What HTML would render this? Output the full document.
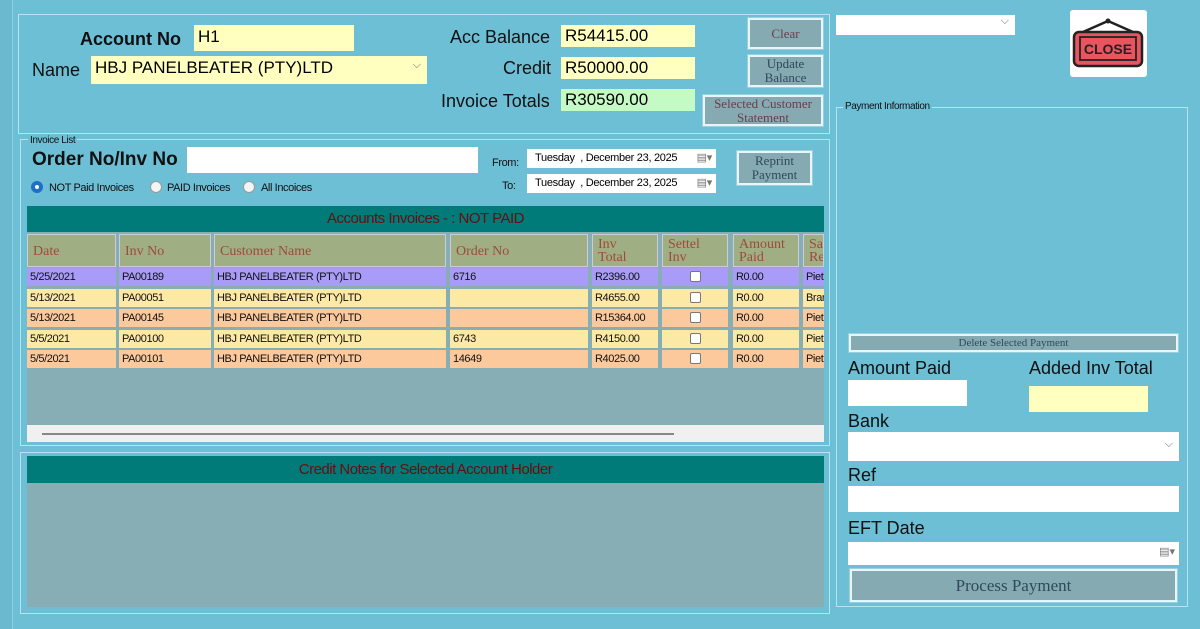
<!DOCTYPE html>
<html><head><meta charset="utf-8"><style>
*{box-sizing:border-box;margin:0;padding:0}
body{width:1200px;height:629px;background:#6dbfd6;font-family:"Liberation Sans",sans-serif;position:relative;overflow:hidden}
.a{position:absolute}
.grp{position:absolute;border:1px solid #b5e3ef}
.lbl{position:absolute;font-size:18px;color:#111;white-space:nowrap}
.in{position:absolute;background:#fff;font-size:17px;padding:2px 4px;color:#000}
.y{background:#ffffc0}
.btn{position:absolute;background:#86aab2;border:2px solid #e8f6fa;box-shadow:0 0 0 1px #9ccfdd;font-family:"Liberation Serif",serif;color:#6b3c4a;font-size:13px;text-align:center;line-height:14px;display:flex;align-items:center;justify-content:center}
.sm{font-size:11px;color:#111;position:absolute;white-space:nowrap;letter-spacing:-0.4px}
.hdr{position:absolute;top:234px;height:33px;background:#9fae83;border:1px solid #ccd;font-family:"Liberation Serif",serif;color:#a04a3a;font-size:14px;line-height:13px;padding:3px 5px;overflow:hidden}
.c{position:absolute;height:18px;font-size:11px;line-height:18px;padding-left:3px;color:#111;overflow:hidden;white-space:nowrap;letter-spacing:-0.4px}
.cb{position:absolute;width:11px;height:11px;background:#fff;border:1px solid #777;border-radius:2px}
.rad{position:absolute;width:12px;height:12px;border-radius:50%;background:#f4f4f4;border:1px solid #999}
.ttl{position:absolute;left:27px;width:797px;background:#007b7a;color:#6b0d0d;font-size:15px;text-align:center;letter-spacing:-0.5px}
</style></head><body>
<div class="a" style="left:0;top:0;width:13px;height:629px;background:#6ab9cf;border-right:1px solid #8fd0e0"></div>

<div class="grp" style="left:18px;top:14px;width:812px;height:120px"></div>
<div class="lbl" style="left:80px;top:29px;font-weight:bold">Account No</div>
<div class="in y" style="left:194px;top:25px;width:160px;height:26px">H1</div>
<div class="lbl" style="left:32px;top:60px">Name</div>
<div class="in y" style="left:91px;top:56px;width:336px;height:28px;font-size:17px">HBJ PANELBEATER (PTY)LTD<span style="position:absolute;right:6px;top:3px;font-size:11px;color:#666">⌵</span></div>
<div class="lbl" style="left:450px;top:27px">Acc Balance</div>
<div class="lbl" style="left:503px;top:58px">Credit</div>
<div class="lbl" style="left:441px;top:91px">Invoice Totals</div>
<div class="in y" style="left:561px;top:25px;width:134px;height:22px;padding-top:1px">R54415.00</div>
<div class="in y" style="left:561px;top:57px;width:134px;height:22px;padding-top:1px">R50000.00</div>
<div class="in" style="left:561px;top:89px;width:134px;height:22px;padding-top:1px;background:#c4fbc4">R30590.00</div>
<div class="btn" style="left:748px;top:18px;width:75px;height:31px">Clear</div>
<div class="btn" style="left:748px;top:55px;width:75px;height:32px;color:#2e4a5a">Update<br>Balance</div>
<div class="btn" style="left:703px;top:95px;width:120px;height:31px">Selected Customer<br>Statement</div>

<div class="in" style="left:836px;top:15px;width:179px;height:20px"><span style="position:absolute;right:6px;top:0;font-size:11px;color:#666">⌵</span></div>
<div class="a" style="left:1070px;top:10px;width:77px;height:67px;background:#fff;border-radius:3px">
<svg width="77" height="67" viewBox="0 0 77 67"><path d="M13 22 L38 11 L63 22" fill="none" stroke="#222" stroke-width="2.5"/><circle cx="38" cy="11" r="2.5" fill="#222"/><rect x="4" y="22" width="68" height="34" rx="5" fill="#e9545e" stroke="#222" stroke-width="2.5"/><rect x="10" y="27" width="56" height="23" fill="none" stroke="#222" stroke-width="1.8"/><text x="38" y="44" text-anchor="middle" font-family="Liberation Sans" font-weight="bold" font-size="14" fill="#222">CLOSE</text></svg></div>

<div class="grp" style="left:20px;top:139px;width:810px;height:307px"></div>
<div class="sm" style="left:28px;top:135px;background:#6dbfd6;padding:0 2px;font-size:10px">Invoice List</div>
<div class="lbl" style="left:32px;top:149px;font-weight:bold;font-size:19px">Order No/Inv No</div>
<div class="in" style="left:187px;top:147px;width:291px;height:26px"></div>
<div class="rad" style="left:31px;top:181px;background:#fff;border:4px solid #1e6fc8"></div>
<div class="sm" style="left:49px;top:182px">NOT Paid Invoices</div>
<div class="rad" style="left:150px;top:181px"></div>
<div class="sm" style="left:167px;top:182px">PAID Invoices</div>
<div class="rad" style="left:243px;top:181px"></div>
<div class="sm" style="left:261px;top:182px">All Incoices</div>
<div class="sm" style="left:492px;top:157px">From:</div>
<div class="sm" style="left:502px;top:180px">To:</div>
<div class="in" style="left:527px;top:149px;width:189px;height:19px;font-size:11px;padding:3px 8px;letter-spacing:-0.3px">Tuesday &nbsp;, December 23, 2025<span style="position:absolute;right:4px;top:2px;color:#777">▤▾</span></div>
<div class="in" style="left:527px;top:174px;width:189px;height:19px;font-size:11px;padding:3px 8px;letter-spacing:-0.3px">Tuesday &nbsp;, December 23, 2025<span style="position:absolute;right:4px;top:2px;color:#777">▤▾</span></div>
<div class="btn" style="left:737px;top:151px;width:75px;height:34px;color:#2e4a5a">Reprint<br>Payment</div>

<div class="a" style="left:27px;top:206px;width:797px;height:219px;background:#86aeb4"></div>
<div class="ttl" style="top:206px;height:26px;line-height:26px">Accounts Invoices - : NOT PAID</div>
<div class="hdr" style="left:27px;width:89px;padding-top:10px">Date</div>
<div class="hdr" style="left:119px;width:92px;padding-top:10px">Inv No</div>
<div class="hdr" style="left:214px;width:232px;padding-top:10px">Customer Name</div>
<div class="hdr" style="left:450px;width:138px;padding-top:10px">Order No</div>
<div class="hdr" style="left:592px;width:66px">Inv<br>Total</div>
<div class="hdr" style="left:662px;width:66px">Settel<br>Inv</div>
<div class="hdr" style="left:733px;width:66px">Amount<br>Paid</div>
<div class="hdr" style="left:803px;width:21px">Sa<br>Re</div>

<div id="rows"></div>
<script>
var d=[["5/25/2021","PA00189","6716","R2396.00","Piet","#a89cf8"],["5/13/2021","PA00051","","R4655.00","Brar","#fde9a6"],["5/13/2021","PA00145","","R15364.00","Piet","#fcc99c"],["5/5/2021","PA00100","6743","R4150.00","Piet","#fde9a6"],["5/5/2021","PA00101","14649","R4025.00","Piet","#fcc99c"]];
var cols=[[27,89],[119,92],[214,232],[450,138],[592,66],[662,66],[733,66],[803,21]];
var h="";
d.forEach(function(r,i){var t=268+i*20.6;var v=[r[0],r[1],"HBJ PANELBEATER (PTY)LTD",r[2],r[3],"","R0.00",r[4]];
cols.forEach(function(c,j){h+='<div class="c" style="left:'+c[0]+'px;top:'+t+'px;width:'+c[1]+'px;background:'+r[5]+'">'+v[j]+'</div>';});
h+='<div class="cb" style="left:690px;top:'+(t+3)+'px"></div>';});
document.getElementById("rows").innerHTML=h;
</script>
<div class="a" style="left:27px;top:425px;width:797px;height:17px;background:#f0f0f0"></div>
<div class="a" style="left:42px;top:433px;width:632px;height:2px;background:#888"></div>

<div class="grp" style="left:20px;top:452px;width:810px;height:162px"></div>
<div class="a" style="left:27px;top:456px;width:797px;height:151px;background:#86aeb4"></div>
<div class="ttl" style="top:456px;height:27px;line-height:27px">Credit Notes for Selected Account Holder</div>

<div class="grp" style="left:836px;top:107px;width:352px;height:500px"></div>
<div class="sm" style="left:843px;top:101px;background:#6dbfd6;padding:0 2px;font-size:10px">Payment Information</div>
<div class="btn" style="left:849px;top:334px;width:329px;height:18px;font-size:11px;color:#2e4a5a">Delete Selected Payment</div>
<div class="lbl" style="left:848px;top:358px">Amount Paid</div>
<div class="lbl" style="left:1029px;top:358px">Added Inv Total</div>
<div class="in" style="left:848px;top:380px;width:119px;height:26px"></div>
<div class="in y" style="left:1029px;top:386px;width:119px;height:26px"></div>
<div class="lbl" style="left:848px;top:411px">Bank</div>
<div class="in" style="left:848px;top:432px;width:331px;height:29px"><span style="position:absolute;right:6px;top:6px;font-size:11px;color:#666">⌵</span></div>
<div class="lbl" style="left:848px;top:465px">Ref</div>
<div class="in" style="left:848px;top:486px;width:331px;height:26px"></div>
<div class="lbl" style="left:848px;top:518px">EFT Date</div>
<div class="in" style="left:848px;top:542px;width:331px;height:23px"><span style="position:absolute;right:4px;top:3px;font-size:11px;color:#777">▤▾</span></div>
<div class="btn" style="left:850px;top:569px;width:327px;height:33px;font-size:17px;color:#2e4a5a">Process Payment</div>
</body></html>
